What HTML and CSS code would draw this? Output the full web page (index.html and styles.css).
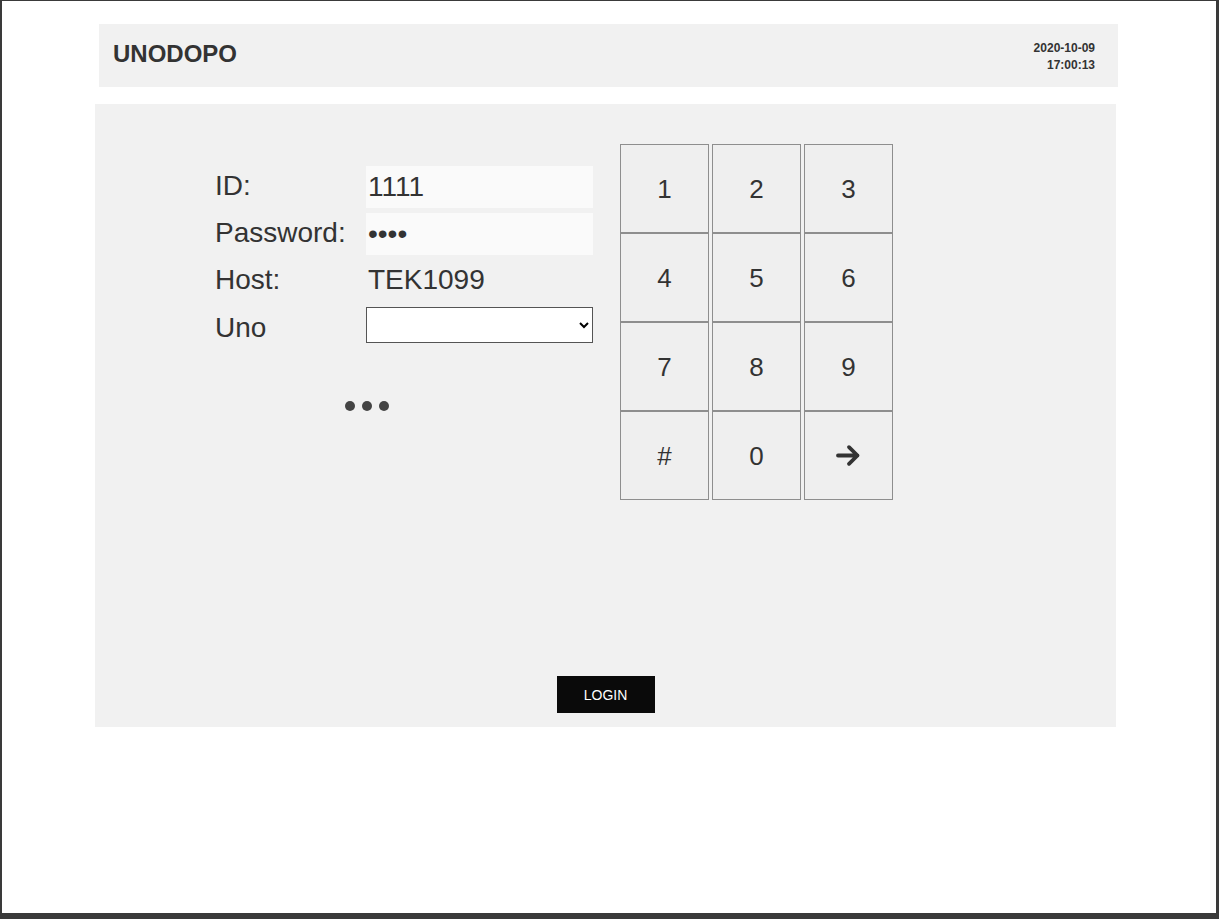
FILE: index.html
```html
<!DOCTYPE html>
<html lang="en">
<head>
<meta charset="utf-8">
<title>UNODOPO Login</title>
<link rel="stylesheet" href="styles.css">
</head>
<body>
<div class="frame">
  <header class="topbar">
    <h1 class="brand">UNODOPO</h1>
    <div class="clock">
      <div>2020-10-09</div>
      <div>17:00:13</div>
    </div>
  </header>
  <main class="panel">
    <div class="panel-body">
      <div class="login-form">
        <div class="fields">
          <label class="field-label" for="uid">ID:</label>
          <input class="field-input" id="uid" type="text" value="1111">
          <label class="field-label" for="pwd">Password:</label>
          <input class="field-input" id="pwd" type="password" value="1111">
          <span class="field-label">Host:</span>
          <span class="field-value">TEK1099</span>
          <label class="field-label field-label-low" for="uno">Uno</label>
          <select class="field-select" id="uno"><option></option></select>
        </div>
        <div class="loader"><span></span><span></span><span></span></div>
      </div>
      <div class="keypad">
        <button class="key">1</button>
        <button class="key">2</button>
        <button class="key">3</button>
        <button class="key">4</button>
        <button class="key">5</button>
        <button class="key">6</button>
        <button class="key">7</button>
        <button class="key">8</button>
        <button class="key">9</button>
        <button class="key">#</button>
        <button class="key">0</button>
        <button class="key key-enter" aria-label="Enter">
          <svg width="25" height="23" viewBox="0 0 25 23"><path d="M2 11.5 H21.5 M13 3.2 L21.5 11.5 L13 19.8" fill="none" stroke="#333" stroke-width="3.8" stroke-linecap="round" stroke-linejoin="round"/></svg>
        </button>
      </div>
    </div>
    <div class="actions">
      <button class="login-btn">LOGIN</button>
    </div>
  </main>
</div>
</body>
</html>
```
FILE: styles.css
```css
* { box-sizing: border-box; }
html, body { margin: 0; padding: 0; background: #fff; }
body { font-family: "Liberation Sans", Arial, sans-serif; color: #333; }

.frame {
  width: 1219px;
  height: 919px;
  border-style: solid;
  border-color: #3a3a3a;
  border-width: 1px 3px 6px 2px;
  background: #fff;
  overflow: hidden;
}

.topbar {
  margin: 23px 0 0 97px;
  width: 1019px;
  height: 63px;
  background: #f1f1f1;
  display: flex;
  align-items: center;
  justify-content: space-between;
  padding: 0 23px 0 14px;
}
.brand {
  margin: 0;
  font-size: 24px;
  font-weight: bold;
  color: #333;
  line-height: 28px;
  padding-bottom: 3px;
}
.clock {
  font-size: 12px;
  font-weight: bold;
  line-height: 17px;
  text-align: right;
  color: #333;
  padding-top: 3px;
}

.panel {
  margin: 17px 0 0 93px;
  width: 1021px;
  height: 623px;
  background: #f1f1f1;
  display: flex;
  flex-direction: column;
  padding-top: 40px;
}
.panel-body {
  display: flex;
  padding-left: 120px;
}
.login-form {
  width: 378px;
  padding-top: 22px;
}
.fields {
  display: grid;
  grid-template-columns: 151px 227px;
  grid-template-rows: 42px 42px 42px 36px;
  row-gap: 5px;
  align-items: center;
}
.field-label {
  font-size: 28px;
  color: #333;
  padding-bottom: 3px;
}
.field-label-low {
  padding-bottom: 0;
  padding-top: 5px;
}
.field-input {
  width: 227px;
  height: 42px;
  border: none;
  background: #fafafa;
  font-family: "Liberation Sans", Arial, sans-serif;
  font-size: 28px;
  color: #333;
  padding: 0 2px;
  outline: none;
}
.field-value {
  font-size: 28px;
  color: #333;
  padding-left: 2px;
  padding-bottom: 2px;
}
.field-select {
  width: 227px;
  height: 36px;
  border: 1px solid #555;
  border-radius: 0;
  background: #fff;
  font-size: 16px;
}
.loader {
  margin-top: 58px;
  padding-left: 130px;
  display: flex;
  gap: 7px;
}
.loader span {
  width: 10px;
  height: 10px;
  border-radius: 50%;
  background: #444;
}

.keypad {
  margin-left: 27px;
  display: grid;
  grid-template-columns: repeat(3, 89px);
  grid-auto-rows: 89px;
  column-gap: 3px;
}
.key {
  margin: 0;
  border: 1px solid #8e8e8e;
  background: #efefef;
  font-family: "Liberation Sans", Arial, sans-serif;
  font-size: 26px;
  color: #333;
  display: flex;
  align-items: center;
  justify-content: center;
  padding: 2px 0 0;
}
.key-enter { padding-top: 0; }

.actions {
  margin-top: auto;
  padding-bottom: 14px;
  display: flex;
  justify-content: center;
}
.login-btn {
  width: 98px;
  height: 37px;
  border: none;
  background: #0a0a0a;
  color: #fff;
  font-family: "Liberation Sans", Arial, sans-serif;
  font-size: 14px;
  padding: 0;
}
```
